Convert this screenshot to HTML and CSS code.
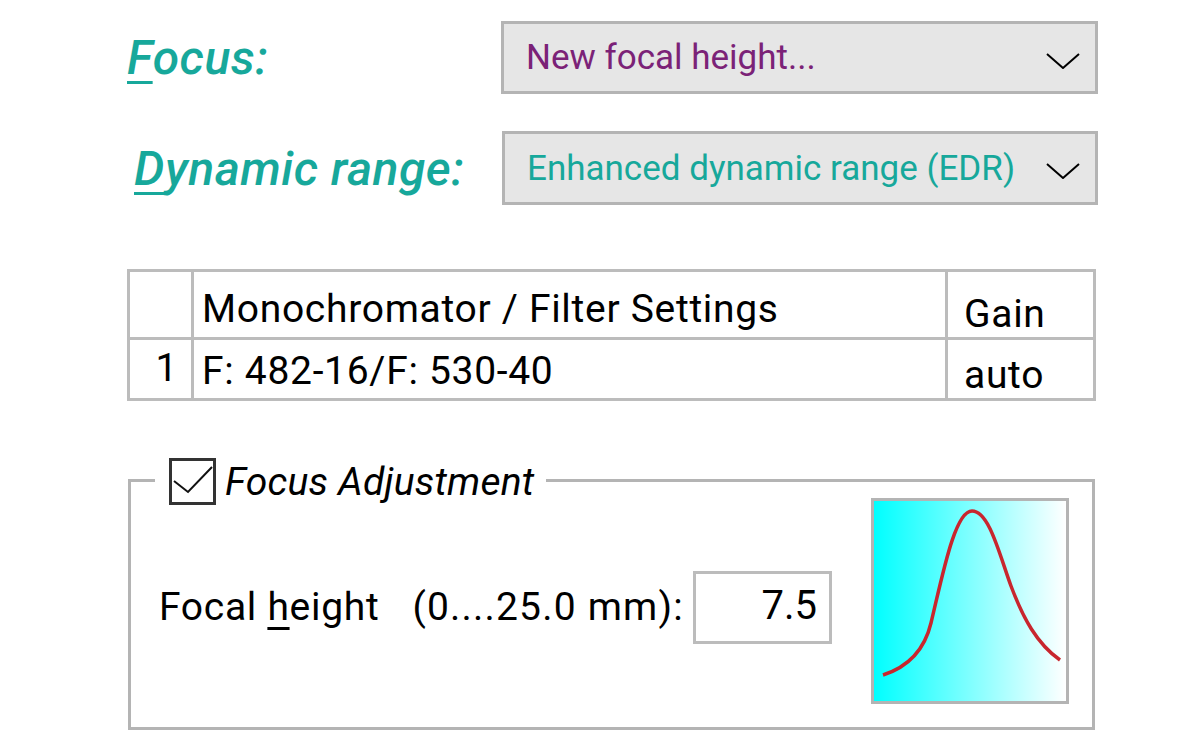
FILE: index.html
```html
<!DOCTYPE html>
<html lang="en">
<head>
  <meta charset="UTF-8">
  <title>Focus settings</title>
  <link rel="stylesheet" href="styles.css">
</head>
<body>

<div class="panel">
  <div class="field-row">
    <label class="field-label"><span class="key">F</span>ocus:</label>
    <div class="dropdown focal">
      <span>New focal height...</span>
      <svg class="chevron" width="34" height="16" viewBox="0 0 34 16"><polyline points="1,1 17,15 33,1" fill="none" stroke="#000" stroke-width="2"/></svg>
    </div>
  </div>

  <div class="field-row range-row">
    <label class="field-label"><span class="key">D</span>ynamic range:</label>
    <div class="dropdown range">
      <span>Enhanced dynamic range (EDR)</span>
      <svg class="chevron" width="34" height="16" viewBox="0 0 34 16"><polyline points="1,1 17,15 33,1" fill="none" stroke="#000" stroke-width="2"/></svg>
    </div>
  </div>

  <table class="filters">
    <colgroup>
      <col class="c-num">
      <col class="c-name">
      <col class="c-gain">
    </colgroup>
    <tr class="head">
      <td></td>
      <td>Monochromator / Filter Settings</td>
      <td class="gain">Gain</td>
    </tr>
    <tr class="data">
      <td class="num">1</td>
      <td class="name">F: 482-16/F: 530-40</td>
      <td class="gain">auto</td>
    </tr>
  </table>

  <div class="group">
    <div class="group-title">
      <span class="checkbox">
        <svg width="41" height="41" viewBox="0 0 41 41"><polyline points="2,20 16,31 40,6" fill="none" stroke="#111" stroke-width="2"/></svg>
      </span>
      <span>Focus Adjustment</span>
    </div>
    <div class="group-body">
      <span class="focal-label">Focal <span class="key">h</span>eight</span>
      <span class="range-label">(0....25.0 mm):</span>
      <div class="value-box">7.5</div>
      <div class="chart">
        <svg width="192" height="200" viewBox="3 3 192 200">
          <defs>
            <linearGradient id="fade" x1="0" y1="0" x2="1" y2="0">
              <stop offset="0" stop-color="#00ffff"/>
              <stop offset="1" stop-color="#ffffff"/>
            </linearGradient>
          </defs>
          <rect x="3" y="3" width="192" height="200" fill="url(#fade)"/>
          <path d="M12 177 C40 168 54 150 60 125 C72 75 84 13 101 13 C118 13 128 55 140 88 C152 120 166 146 189 162" fill="none" stroke="#c8262e" stroke-width="3.5"/>
        </svg>
      </div>
    </div>
  </div>
</div>

</body>
</html>
```

FILE: styles.css
```css
body {
  margin: 0;
  background-color: #fff;
  color: #000;
  font-family: Roboto, "Noto Sans", sans-serif;
}
.panel {
  width: 971px;
  margin-left: 127px;
  padding-top: 21px;
}
.field-row {
  display: flex;
  align-items: center;
}
.range-row {
  margin-top: 37px;
}
.field-label {
  width: 374px;
  font-size: 48px;
  font-weight: 500;
  font-style: italic;
  letter-spacing: 0.5px;
  color: #17a89b;
}
.range-row .field-label {
  width: 368px;
  padding-left: 7px;
}
.key {
  text-decoration: underline;
  text-underline-offset: 7px;
  text-decoration-thickness: 3px;
}
.dropdown {
  flex: 1;
  height: 67px;
  display: flex;
  align-items: center;
  justify-content: space-between;
  padding: 0 15px 0 22px;
  background-color: #e6e6e6;
  border: 3px solid #b4b4b4;
  font-size: 35px;
}
.focal {
  color: #7b2277;
}
.range {
  color: #17a89b;
  height: 68px;
}
.chevron {
  margin-top: 6px;
}
.filters {
  width: 969px;
  margin-top: 64px;
  border-collapse: collapse;
  font-size: 39px;
  letter-spacing: 0.7px;
}
.c-num {
  width: 64px;
}
.c-gain {
  width: 148px;
}
.filters td {
  border: 3px solid #bcbcbc;
  padding: 0 0 0 8px;
  vertical-align: top;
  box-sizing: border-box;
}
.head td {
  height: 67px;
  padding-top: 14px;
}
.data td {
  height: 57px;
  padding-top: 8px;
}
.filters td.gain {
  padding-left: 16px;
  padding-top: 19px;
}
.data td.gain {
  padding-top: 12px;
}
.filters td.num {
  text-align: right;
  padding-right: 13px;
  padding-top: 5px;
}
.group {
  position: relative;
  margin-top: 78px;
  margin-left: 1px;
  width: 961px;
  height: 245px;
  border: 3px solid #b4b4b4;
}
.group-title {
  position: absolute;
  top: -24px;
  left: 24px;
  display: flex;
  align-items: center;
  gap: 9px;
  padding: 0 12px 0 14px;
  background-color: #fff;
  font-size: 39px;
  font-style: italic;
  letter-spacing: 0.2px;
}
.checkbox {
  width: 41px;
  height: 41px;
  border: 3px solid #333;
}
.checkbox svg {
  display: block;
}
.group-body {
  display: flex;
  align-items: center;
  height: 100%;
  padding-left: 28px;
  font-size: 39px;
  letter-spacing: 0.7px;
}
.focal-label,
.range-label {
  margin-top: 4px;
}
.range-label {
  margin-left: 33px;
  letter-spacing: 1.2px;
}
.value-box {
  width: 139px;
  height: 73px;
  margin-left: 9px;
  margin-top: 6px;
  box-sizing: border-box;
  border: 3px solid #bcbcbc;
  padding: 8px 12px 0 0;
  text-align: right;
  font-size: 40px;
  letter-spacing: 0;
}
.chart {
  margin-left: auto;
  margin-right: 23px;
  margin-top: -8px;
  border: 3px solid #b4b4b4;
  line-height: 0;
}
```
